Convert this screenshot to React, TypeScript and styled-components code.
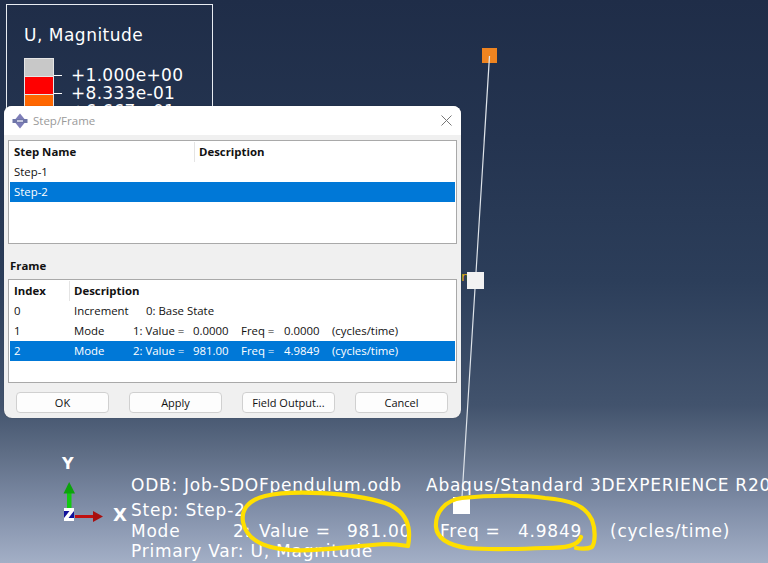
import React from "react";
import styled, { createGlobalStyle } from "styled-components";

const Global = createGlobalStyle`
  html, body { margin: 0; padding: 0; width: 768px; height: 563px; overflow: hidden; }
`;

const Viewport = styled.div`
  position: relative;
  width: 768px;
  height: 563px;
  overflow: hidden;
  font-family: "DejaVu Sans", sans-serif;
  color: #fff;
  background: linear-gradient(180deg, #1f2d48 0%, #243450 25%, #2c3e5a 50%, #42536d 72%, #5d6c84 80%, #7f8da7 90%, #a3afc6 100%);
`;

const Scene = styled.svg`
  position: absolute;
  inset: 0;
  width: 768px;
  height: 563px;
`;

const Legend = styled.div`
  position: absolute;
  left: 6px;
  top: 4px;
  width: 207px;
  height: 200px;
  border: 1px solid #e8ecf2;
  padding: 20px 0 0 17px;
  box-sizing: border-box;
`;

const LegendTitle = styled.div`
  font-size: 17px;
  line-height: 20px;
  margin-bottom: 13px;
  letter-spacing: 0.5px;
`;

const LegendRow = styled.div`
  display: flex;
  align-items: flex-end;
  height: 18px;
`;

const Swatch = styled.div<{ $color: string }>`
  width: 28px;
  height: 17px;
  box-sizing: content-box;
  background: ${(p) => p.$color};
  border: 1px solid #e6e6e6;
  border-bottom: none;
`;

const Tick = styled.div`
  width: 8px;
  height: 1px;
  background: #fff;
  margin-right: 9px;
`;

const LegendValue = styled.div`
  font-size: 17px;
  line-height: 16px;
  margin-bottom: -7px;
  letter-spacing: 0.3px;
`;

const NodeLabel = styled.div`
  position: absolute;
  left: 461px;
  top: 269px;
  font-size: 13px;
  color: #e3b015;
`;

const Dialog = styled.div`
  position: absolute;
  left: 4px;
  top: 106px;
  width: 457px;
  height: 312px;
  box-sizing: border-box;
  border-radius: 8px;
  background: #f0f0f0;
  overflow: hidden;
  font-family: "Open Sans", "Noto Sans", sans-serif;
  font-size: 11.4px;
  color: #111;
  box-shadow: 0 0 1px rgba(0, 0, 0, 0.4);
  display: flex;
  flex-direction: column;
`;

const TitleBar = styled.div`
  height: 29px;
  flex: none;
  background: #fff;
  display: flex;
  align-items: center;
  padding: 0 9px 0 8px;
  gap: 5px;
`;

const TitleText = styled.div`
  flex: 1;
  color: #9a9a9a;
  font-size: 11.5px;
`;

const Body = styled.div`
  flex: 1;
  padding: 5px 4px 0;
  display: flex;
  flex-direction: column;
`;

const ListBox = styled.div`
  height: 104px;
  flex: none;
  box-sizing: border-box;
  border: 1px solid #a9a9a9;
  background: #fff;
  padding: 1px 1px 0;
`;

const Header = styled.div<{ $cols: string }>`
  display: grid;
  grid-template-columns: ${(p) => p.$cols};
  height: 20px;
  align-items: center;
  font-weight: 700;
`;

const HeaderCell = styled.div`
  padding-left: 4px;
  height: 20px;
  line-height: 19px;
  border-right: 1px solid #e4e4e4;
  &:last-child { border-right: none; }
`;

const StepRow = styled.div<{ $selected?: boolean }>`
  height: 20px;
  line-height: 20px;
  padding-left: 4px;
  background: ${(p) => (p.$selected ? "#0078d7" : "transparent")};
  color: ${(p) => (p.$selected ? "#fff" : "#111")};
`;

const FrameLabel = styled.div`
  font-weight: 700;
  height: 35px;
  line-height: 44px;
  padding-left: 2px;
  flex: none;
`;

const FrameRow = styled.div<{ $selected?: boolean }>`
  display: grid;
  grid-template-columns: 60px 59px 60px 48px 43px 48px 1fr;
  height: 20px;
  line-height: 20px;
  padding-left: 4px;
  white-space: pre;
  background: ${(p) => (p.$selected ? "#0078d7" : "transparent")};
  color: ${(p) => (p.$selected ? "#fff" : "#111")};
`;

const BaseState = styled.span`
  grid-column: 3 / -1;
  padding-left: 13px;
`;

const Buttons = styled.div`
  display: flex;
  gap: 20px;
  padding: 9px 0 0 8px;
`;

const Button = styled.button`
  width: 93px;
  height: 21px;
  padding: 0;
  box-sizing: border-box;
  border: 1px solid #d0d0d0;
  border-radius: 4px;
  background: #fdfdfd;
  color: #111;
  font-family: inherit;
  font-size: 11px;
  line-height: 18px;
`;

const Triad = styled.svg`
  position: absolute;
  left: 60px;
  top: 478px;
  width: 50px;
  height: 46px;
`;

const AxisLabel = styled.div<{ $x: number; $y: number }>`
  position: absolute;
  left: ${(p) => p.$x}px;
  top: ${(p) => p.$y}px;
  font-family: "DejaVu Sans", sans-serif;
  font-weight: 700;
  font-size: ${(p) => (p.$x > 100 ? 18 : 16)}px;
  line-height: 18px;
`;

const Info = styled.div`
  position: absolute;
  left: 131px;
  top: 475px;
  width: 660px;
  font-size: 17px;
  letter-spacing: 0.76px;
  white-space: pre;
`;

const InfoTop = styled.div`
  display: grid;
  grid-template-columns: 295px 1fr;
  height: 20px;
  line-height: 20px;
  margin-bottom: 5px;
`;

const InfoLine = styled.div`
  height: 20.5px;
  line-height: 20px;
`;

const ModeLine = styled.div`
  display: grid;
  grid-template-columns: 102px 26px 88px 93px 78px 92px 1fr;
  height: 20.5px;
  line-height: 20px;
`;

const Ink = styled.svg`
  position: absolute;
  inset: 0;
  width: 768px;
  height: 563px;
  pointer-events: none;
`;

const StepIcon = () => (
  <svg width="16" height="16" viewBox="0 0 16 16">
    <path d="M8 0.5 L12.5 6 H3.5 Z" fill="#7d7db8" />
    <path d="M8 15.5 L3.5 10 H12.5 Z" fill="#7d7db8" />
    <rect x="0.5" y="6" width="15" height="4" fill="#6f76a8" />
    <rect x="5" y="7" width="6" height="2" fill="#c9cbe0" />
  </svg>
);

const CloseIcon = () => (
  <svg width="11" height="11" viewBox="0 0 11 11">
    <path d="M0.5 0.5 L10.5 10.5 M10.5 0.5 L0.5 10.5" stroke="#777" strokeWidth="1" />
  </svg>
);

export default function App() {
  return (
    <Viewport>
      <Global />
      <Legend>
        <LegendTitle>U, Magnitude</LegendTitle>
        <LegendRow>
          <Swatch $color="#c8c8c8" />
          <Tick />
          <LegendValue>+1.000e+00</LegendValue>
        </LegendRow>
        <LegendRow>
          <Swatch $color="#ff0000" />
          <Tick />
          <LegendValue>+8.333e-01</LegendValue>
        </LegendRow>
        <LegendRow>
          <Swatch $color="#ff6600" />
          <Tick />
          <LegendValue>+6.667e-01</LegendValue>
        </LegendRow>
      </Legend>

      <NodeLabel>n</NodeLabel>
      <Scene viewBox="0 0 768 563">
        <rect x="482" y="48" width="15" height="15" fill="#ef8420" />
        <line x1="489.5" y1="56" x2="461.5" y2="505" stroke="#dfe4ea" strokeWidth="1.2" />
        <rect x="467" y="272" width="17" height="17" fill="#f2f2f2" />
        <rect x="453" y="497" width="17" height="17" fill="#fff" />
      </Scene>

      <Dialog>
        <TitleBar>
          <StepIcon />
          <TitleText>Step/Frame</TitleText>
          <CloseIcon />
        </TitleBar>
        <Body>
          <ListBox>
            <Header $cols="185px 1fr">
              <HeaderCell>Step Name</HeaderCell>
              <HeaderCell>Description</HeaderCell>
            </Header>
            <StepRow>Step-1</StepRow>
            <StepRow $selected>Step-2</StepRow>
          </ListBox>
          <FrameLabel>Frame</FrameLabel>
          <ListBox>
            <Header $cols="60px 1fr">
              <HeaderCell>Index</HeaderCell>
              <HeaderCell>Description</HeaderCell>
            </Header>
            <FrameRow>
              <span>0</span>
              <span>Increment</span>
              <BaseState>0: Base State</BaseState>
            </FrameRow>
            <FrameRow>
              <span>1</span>
              <span>Mode</span>
              <span>1: Value =</span>
              <span>0.0000</span>
              <span>Freq =</span>
              <span>0.0000</span>
              <span>(cycles/time)</span>
            </FrameRow>
            <FrameRow $selected>
              <span>2</span>
              <span>Mode</span>
              <span>2: Value =</span>
              <span>981.00</span>
              <span>Freq =</span>
              <span>4.9849</span>
              <span>(cycles/time)</span>
            </FrameRow>
          </ListBox>
          <Buttons>
            <Button>OK</Button>
            <Button>Apply</Button>
            <Button>Field Output...</Button>
            <Button>Cancel</Button>
          </Buttons>
        </Body>
      </Dialog>

      <AxisLabel $x={62} $y={455}>Y</AxisLabel>
      <AxisLabel $x={113} $y={506}>X</AxisLabel>
      <Triad viewBox="0 0 50 46">
        <rect x="7" y="14" width="4.5" height="17" fill="#12c912" />
        <path d="M9.2 4 L15 15.5 H3.5 Z" fill="#0ca30c" />
        <rect x="15" y="37" width="19" height="3" fill="#c01010" />
        <path d="M43 38.5 L33 33 V44 Z" fill="#a80f0f" />
        <rect x="4" y="30" width="10" height="13" fill="#10109a" />
        <path d="M4 30 H14 V33 L8.5 40 H14 V43 H4 V40 L9.5 33 H4 Z" fill="#fff" />
      </Triad>

      <Info>
        <InfoTop>
          <span>ODB: Job-SDOFpendulum.odb</span>
          <span>Abaqus/Standard 3DEXPERIENCE R2021x</span>
        </InfoTop>
        <InfoLine>Step: Step-2</InfoLine>
        <ModeLine>
          <span>Mode</span>
          <span>2:</span>
          <span>Value =</span>
          <span>981.00</span>
          <span>Freq =</span>
          <span>4.9849</span>
          <span>(cycles/time)</span>
        </ModeLine>
        <InfoLine>Primary Var: U, Magnitude</InfoLine>
      </Info>

      <Ink viewBox="0 0 768 563">
        <g fill="none" stroke="#ffdf00" strokeWidth="4.2" strokeLinecap="round" strokeLinejoin="round">
          <path d="M408 546 C412 525 405 510 385 503 C350 492 290 490 265 496 C248 500 241 510 243 522 C246 538 262 548 290 550 C320 552 350 546 385 544 C395 544 402 545 408 546" />
          <path d="M581 537 C578 546 566 548 545 548 C520 549 490 550 467 548 C448 545 437 538 436 527 C435 513 445 500 462 498 C490 495 525 495 545 498 C570 500 585 505 592 520 C596 530 595 543 592 547 C588 549 582 549 576 548" />
        </g>
      </Ink>
    </Viewport>
  );
}
